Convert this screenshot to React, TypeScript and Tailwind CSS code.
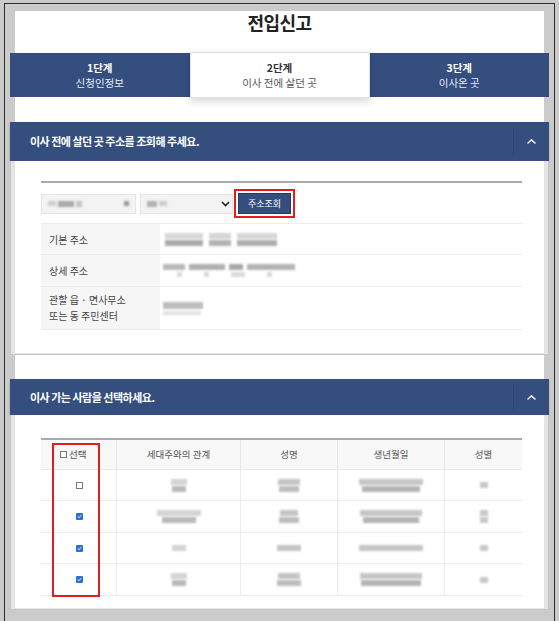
import React from "react";

const FONT = { fontFamily: '"Noto Sans CJK KR", "Noto Sans", sans-serif' };

function Blur({ w, h = 7, c = "#b4b4b4", className = "" }: { w: number; h?: number; c?: string; className?: string }) {
  return <div className={"blur-[1px] " + className} style={{ width: w, height: h, background: c }} />;
}

function Check({ checked }: { checked?: boolean }) {
  if (checked) {
    return (
      <div className="w-[7px] h-[7px] bg-[#2f6fd0] flex items-center justify-center rounded-[1px]">
        <svg width="5" height="5" viewBox="0 0 5 5">
          <path d="M0.8 2.6 L2 3.7 L4.2 1.2" stroke="#fff" strokeWidth="0.9" fill="none" />
        </svg>
      </div>
    );
  }
  return <div className="w-[7px] h-[7px] border border-[#777] bg-white" />;
}

function SectionHeader({ title, h }: { title: string; h: string }) {
  return (
    <div className={"flex items-center bg-[#344e7e] shadow-[0_1px_2px_rgba(0,0,0,0.25)] " + h}>
      <div className="flex-1 pl-[20px] text-[11px] font-bold text-white tracking-[-0.5px]">{title}</div>
      <div className="w-px h-[26px] bg-[#2c4470]" />
      <div className="w-[35px] flex justify-center">
        <svg width="11" height="7" viewBox="0 0 11 7">
          <path d="M1.5 5.5 L5.5 1.8 L9.5 5.5" stroke="#e3e8f1" strokeWidth="1.6" fill="none" />
        </svg>
      </div>
    </div>
  );
}

function CardBody({ children }: { children: React.ReactNode }) {
  return (
    <div className="border-x border-b border-[#c6c6c6] bg-[#e4e4e4] px-[4px] pb-[1px]">
      <div className="bg-white">{children}</div>
    </div>
  );
}

function Tab({ step, label, active }: { step: string; label: string; active?: boolean }) {
  return (
    <>
      <div className={"h-[15px] leading-[15px] text-[10.5px] font-bold " + (active ? "text-[#333]" : "text-white")}>{step}</div>
      <div className={"h-[15px] leading-[15px] text-[10.5px] " + (active ? "text-[#555]" : "text-[#e8ecf3]")}>{label}</div>
    </>
  );
}

export default function App() {
  const rows = [
    { checked: false, c2: [16, 14], c3: [22, 20], c4: [64, 58], c5: [8], h: "h-[31px]" },
    { checked: true, c2: [44, 34], c3: [18, 20], c4: [62, 56], c5: [8, 8], h: "h-[32px]" },
    { checked: true, c2: [14], c3: [24], c4: [64], c5: [8], h: "h-[31px]" },
    { checked: true, c2: [16, 14], c3: [22, 24], c4: [62, 60], c5: [8], h: "h-[32px]" },
  ];
  return (
    <div className="w-[559px] h-[621px] bg-[#cbcbcb] overflow-hidden flex" style={FONT}>
      <div className="mt-[3px] ml-[4px] w-[551px] h-[618px] border-t border-x border-[#2d2d2d] bg-[#cbcbcb]">
        <div className="mt-[11px] ml-[10px] w-[529px] bg-white">
          <div className="-mt-[4px] h-[22px] text-center text-[18px] font-bold leading-[22px] text-[#222] tracking-[-0.5px]">
            전입신고
          </div>
          <div className="mt-[20px] -mx-[5px] flex h-[44px] bg-[#344e7e]">
            <div className="flex-1 flex flex-col items-center justify-center">
              <Tab step="1단계" label="신청인정보" />
            </div>
            <div className="w-[180px] -my-[1px] flex flex-col items-center justify-center bg-white shadow-[0_3px_8px_rgba(0,0,0,0.18)] border border-[#e2e2e2]">
              <Tab step="2단계" label="이사 전에 살던 곳" active />
            </div>
            <div className="flex-1 flex flex-col items-center justify-center">
              <Tab step="3단계" label="이사온 곳" />
            </div>
          </div>

          <div className="mt-[25px] -mx-[5px]">
            <SectionHeader title="이사 전에 살던 곳 주소를 조회해 주세요." h="h-[39px]" />
            <CardBody>
              <div className="pt-[20px] pb-[23px] pl-[26px] pr-[22px]">
                <div className="h-[2px] bg-[#a9a9a9]" />
                <div className="mt-[6px] flex items-center">
                  <div className="w-[95px] h-[20px] bg-[#f3f3f3] border border-[#e6e6e6] flex items-center justify-between px-[6px]">
                    <div className="flex gap-[2px]">
                      <Blur w={8} h={5} c="#cfcfcf" />
                      <Blur w={16} h={6} c="#a9a9a9" />
                      <Blur w={6} h={6} c="#c4c4c4" />
                    </div>
                    <Blur w={5} h={5} c="#9a9a9a" />
                  </div>
                  <div className="ml-[4px] w-[93px] h-[20px] bg-[#f3f3f3] border border-[#e6e6e6] flex items-center justify-between pl-[6px] pr-[2px]">
                    <div className="flex gap-[2px]">
                      <Blur w={10} h={6} c="#b2b2b2" />
                      <Blur w={8} h={5} c="#cdcdcd" />
                    </div>
                    <svg width="9" height="6" viewBox="0 0 9 6">
                      <path d="M1 1 L4.5 4.5 L8 1" stroke="#222" strokeWidth="1.6" fill="none" />
                    </svg>
                  </div>
                  <div className="ml-[1px] border-2 border-[#e21d1d] p-[2px]">
                    <div className="w-[53px] h-[21px] bg-[#344e7e] text-white text-[9px] flex items-center justify-center border border-[#233a63]">
                      주소조회
                    </div>
                  </div>
                </div>
                <div className="mt-[5px] border-t border-[#ececec] text-[10px] text-[#444]">
                  <div className="flex h-[31px] border-b border-[#ececec]">
                    <div className="w-[119px] bg-[#f6f6f6] pl-[8px] flex items-center">기본 주소</div>
                    <div className="pl-[5px] flex flex-col justify-center gap-[1px]">
                      <div className="flex gap-[6px]">
                        <Blur w={38} h={6} c="#d8d8d8" />
                        <Blur w={22} h={6} c="#d4d4d4" />
                        <Blur w={40} h={6} c="#d6d6d6" />
                      </div>
                      <div className="flex gap-[6px]">
                        <Blur w={38} h={6} c="#aaaaaa" />
                        <Blur w={22} h={6} c="#b2b2b2" />
                        <Blur w={40} h={6} c="#aeaeae" />
                      </div>
                    </div>
                  </div>
                  <div className="flex h-[32px] border-b border-[#ececec]">
                    <div className="w-[119px] bg-[#f6f6f6] pl-[8px] flex items-center">상세 주소</div>
                    <div className="pl-[3px] flex flex-col justify-center gap-[2px]">
                      <div className="flex gap-[4px]">
                        <Blur w={22} h={6} c="#b8b8b8" />
                        <Blur w={36} h={6} c="#b0b0b0" />
                        <Blur w={14} h={6} c="#a8a8a8" />
                        <Blur w={48} h={6} c="#b4b4b4" />
                      </div>
                      <div className="flex gap-[22px] pl-[14px]">
                        <Blur w={5} h={5} c="#dadada" />
                        <Blur w={5} h={5} c="#dadada" />
                        <Blur w={14} h={5} c="#dadada" />
                        <Blur w={5} h={5} c="#dadada" />
                      </div>
                    </div>
                  </div>
                  <div className="flex h-[43px] border-b border-[#ececec]">
                    <div className="w-[119px] bg-[#f6f6f6] pl-[8px] flex flex-col justify-center leading-[16px]">
                      <div>관할 읍 · 면사무소</div>
                      <div>또는 동 주민센터</div>
                    </div>
                    <div className="pl-[3px] flex flex-col justify-center gap-[2px]">
                      <Blur w={40} h={7} c="#bdbdbd" />
                      <Blur w={38} h={4} c="#e2e2e2" />
                    </div>
                  </div>
                </div>
              </div>
            </CardBody>
          </div>

          <div className="mt-[24px] -mx-[5px]">
            <SectionHeader title="이사 가는 사람을 선택하세요." h="h-[36px]" />
            <CardBody>
              <div className="pt-[23px] pb-[12px] pl-[26px] pr-[22px] relative">
                <div className="border-t-2 border-[#a9a9a9] text-[9.5px] text-[#555]">
                  <div className="flex h-[30px] bg-[#f8f8f8] border-b border-[#ececec]">
                    <div className="w-[76px] border-r border-[#e6e6e6] flex items-center pl-[19px] gap-[2px]">
                      <Check />
                      <span>선택</span>
                    </div>
                    <div className="w-[124px] border-r border-[#e6e6e6] flex items-center justify-center">세대주와의 관계</div>
                    <div className="w-[97px] border-r border-[#e6e6e6] flex items-center justify-center">성명</div>
                    <div className="w-[107px] border-r border-[#e6e6e6] flex items-center justify-center">생년월일</div>
                    <div className="flex-1 flex items-center justify-center">성별</div>
                  </div>
                  {rows.map((r, i) => (
                    <div key={i} className={"flex border-b border-[#ececec] " + r.h}>
                      <div className="w-[76px] border-r border-[#ececec] flex items-center justify-center pl-[2px]">
                        <Check checked={r.checked} />
                      </div>
                      <div className="w-[124px] border-r border-[#ececec] flex flex-col items-center justify-center gap-[1px]">
                        {r.c2.map((w, j) => (
                          <Blur key={j} w={w} h={6} c={j === 0 ? "#d4d4d4" : "#b9b9b9"} />
                        ))}
                      </div>
                      <div className="w-[97px] border-r border-[#ececec] flex flex-col items-center justify-center gap-[1px]">
                        {r.c3.map((w, j) => (
                          <Blur key={j} w={w} h={6} c={j === 0 ? "#c4c4c4" : "#bdbdbd"} />
                        ))}
                      </div>
                      <div className="w-[107px] border-r border-[#ececec] flex flex-col items-center justify-center gap-[1px]">
                        {r.c4.map((w, j) => (
                          <Blur key={j} w={w} h={6} c={j === 0 ? "#c6c6c6" : "#b4b4b4"} />
                        ))}
                      </div>
                      <div className="flex-1 flex flex-col items-center justify-center gap-[1px]">
                        {r.c5.map((w, j) => (
                          <Blur key={j} w={w} h={6} c="#c8c8c8" />
                        ))}
                      </div>
                    </div>
                  ))}
                </div>
                <div className="absolute left-[37px] top-[28px] w-[48px] h-[154px] border-2 border-[#e21d1d]" />
              </div>
            </CardBody>
          </div>
        </div>
      </div>
    </div>
  );
}
